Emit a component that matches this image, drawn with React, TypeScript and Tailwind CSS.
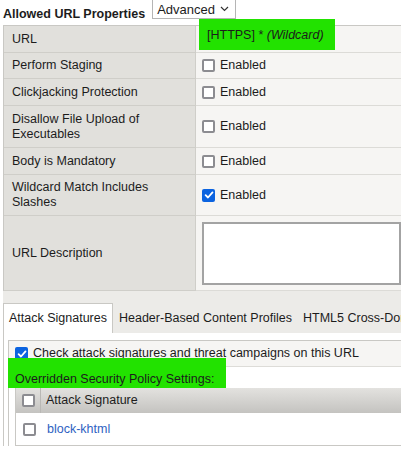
import React from "react";

function Box({ checked = false }: { checked?: boolean }) {
  if (checked) {
    return (
      <span className="flex h-[13px] w-[13px] shrink-0 items-center justify-center rounded-[2px] bg-[#0b63e0]">
        <svg width="10" height="10" viewBox="0 0 10 10" fill="none">
          <path d="M1.6 5.2 L4 7.5 L8.5 2.4" stroke="white" strokeWidth="1.8" strokeLinecap="round" strokeLinejoin="round" />
        </svg>
      </span>
    );
  }
  return <span className="block h-[13px] w-[13px] shrink-0 rounded-[2px] border-2 border-[#8c8c91] bg-white" />;
}

function Enabled({ checked = false }: { checked?: boolean }) {
  return (
    <div className="flex items-center gap-[5px]">
      <Box checked={checked} />
      <span>Enabled</span>
    </div>
  );
}

type Row = { label: React.ReactNode; h: string; value: React.ReactNode };

export default function App() {
  const rows: Row[] = [
    {
      label: "URL",
      h: "h-[27px]",
      value: (
        <div className="relative h-full w-full">
          <div className="absolute left-[-3px] top-[-7px] flex h-[31px] w-[136px] items-center bg-[#22e200] pl-[8px] pt-[1px]">
            [HTTPS] *&nbsp;<i>(Wildcard)</i>
          </div>
        </div>
      ),
    },
    { label: "Perform Staging", h: "h-[26px]", value: <Enabled /> },
    { label: "Clickjacking Protection", h: "h-[27px]", value: <Enabled /> },
    {
      label: (
        <>
          Disallow File Upload of
          <br />
          Executables
        </>
      ),
      h: "h-[42px]",
      value: <Enabled />,
    },
    { label: "Body is Mandatory", h: "h-[27px]", value: <Enabled /> },
    {
      label: (
        <>
          Wildcard Match Includes
          <br />
          Slashes
        </>
      ),
      h: "h-[41px]",
      value: <Enabled checked />,
    },
    {
      label: "URL Description",
      h: "h-[75px]",
      value: (
        <div className="h-[63px] w-full border-2 border-[#a3a3a3] bg-white" />
      ),
    },
  ];

  return (
    <div
      className="h-[449px] w-[401px] overflow-hidden bg-white text-[12.5px] leading-[15px] text-[#1c1c1c]"
      style={{ fontFamily: '"Liberation Sans", Arial, sans-serif' }}
    >
      {/* header */}
      <div className="flex h-[25px] items-start pl-[3px]">
        <span className="pt-[7px] font-bold">Allowed URL Properties</span>
        <div className="ml-[7px] flex h-[19px] w-[84px] items-center justify-between border border-t-0 border-[#b5b5b5] bg-white pl-[4px] pr-[6px] text-[13px]">
          <span>Advanced</span>
          <svg width="9" height="6" viewBox="0 0 9 6" fill="none">
            <path d="M1 1 L4.5 4.5 L8 1" stroke="#333" strokeWidth="1.2" />
          </svg>
        </div>
      </div>

      {/* properties table */}
      <div className="ml-[3px] border-l border-t border-[#c9c8c4]">
        {rows.map((r, i) => (
          <div key={i} className={`grid grid-cols-[192px_1fr] ${r.h}`}>
            <div className="flex items-center border-b border-r border-[#cfcec9] bg-[#e1e0dc] pl-[8px]">
              <span>{r.label}</span>
            </div>
            <div className="flex items-center border-b border-[#dcdbd7] bg-[#f6f5f3] pl-[6px]">
              {r.value}
            </div>
          </div>
        ))}
      </div>

      {/* tabs */}
      <div className="ml-[3px] flex h-[42px] items-end overflow-hidden whitespace-nowrap bg-[#ecebe8]">
        <div className="flex h-[30px] shrink-0 items-center border border-b-0 border-[#c9c8c4] bg-white px-[5px]">
          Attack Signatures
        </div>
        <div className="flex h-[30px] shrink-0 items-center pl-[6px] pr-[5px]">Header-Based Content Profiles</div>
        <div className="flex h-[30px] shrink-0 items-center pl-[6px]">HTML5 Cross-Domain Request Enforcement</div>
      </div>

      {/* tab panel */}
      <div className="ml-[3px] border-l border-[#c9c8c4] bg-white pl-[4px] pt-[7px]">
        <div className="border-l border-t border-[#c9c8c4]">
          <div className="flex h-[26px] items-center gap-[5px] border-b border-[#dddcd8] bg-[#f6f5f3] pl-[6px]">
            <Box checked />
            <span className="whitespace-nowrap">Check attack signatures and threat campaigns on this URL</span>
          </div>
          <div className="relative flex h-[21px] items-center pl-[6px] pt-[3px]">
            <div className="absolute left-[-1px] top-[-9px] h-[30px] w-[218px] bg-[#22e200]" />
            <span className="relative">Overridden Security Policy Settings:</span>
          </div>
          <div className="ml-[6px] border-b border-l border-[#c9c8c4]">
            <div className="flex h-[25px] items-center bg-linear-to-b from-[#e3e2df] to-[#c4c3c0]">
              <div className="flex h-full w-[25px] items-center justify-center border-r border-[#b9b8b5]">
                <Box />
              </div>
              <span className="pl-[5px]">Attack Signature</span>
            </div>
            <div className="flex h-[32px] items-center bg-white">
              <div className="flex w-[25px] justify-center pl-[1px]">
                <Box />
              </div>
              <span className="pl-[6px] text-[#2f62c2]">block-khtml</span>
            </div>
          </div>
        </div>
      </div>
    </div>
  );
}
